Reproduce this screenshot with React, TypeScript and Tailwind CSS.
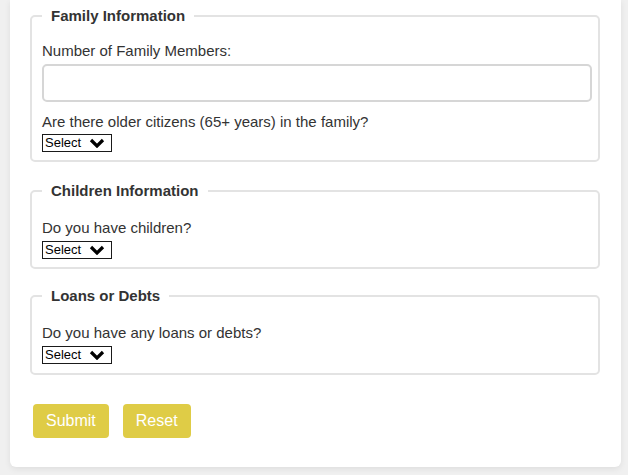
import React from 'react';

const font = { fontFamily: '"Liberation Sans", Arial, sans-serif' };

const SelectBox: React.FC = () => (
  <div className="relative w-[70px] h-[18px]">
    <select
      defaultValue=""
      className="appearance-none block w-[70px] h-[18px] border border-[#1a1a1a] bg-white pl-[2px] text-[13px] leading-[16px] text-black outline-none"
    >
      <option value="">Select</option>
      <option value="yes">Yes</option>
      <option value="no">No</option>
    </select>
    {/* chevron over the native select */}
    <svg
      className="pointer-events-none absolute right-[7px] top-[4px]"
      width="16"
      height="10"
      viewBox="0 0 16 10"
    >
      <polyline points="2,2 8,8 14,2" fill="none" stroke="#000" strokeWidth="3.2" strokeLinejoin="miter" />
    </svg>
  </div>
);

interface SectionProps {
  title: string;
  children: React.ReactNode;
  className?: string;
}

const Section: React.FC<SectionProps> = ({ title, children, className }) => (
  <fieldset className={`border-2 border-[#e3e3e3] rounded-[5px] pl-[10px] pr-[6px] ${className ?? 'pb-[8px]'}`}>
    <legend className="px-[9px] text-[15px] leading-[17px] font-bold text-[#333]">{title}</legend>
    <div className="pt-[18px]">{children}</div>
  </fieldset>
);

export default function App() {
  return (
    <div className="min-h-[475px] bg-[#f0f0f0] pl-[10px] pr-[7px]" style={font}>
      <div className="bg-white rounded-b-[6px] shadow-[0_2px_6px_rgba(0,0,0,0.08)] pt-[7px] pl-[20px] pr-[21px] pb-[29px]">
        <Section title="Family Information">
          <label className="block text-[15px] leading-[17px] text-[#333] mb-[5px]">Number of Family Members:</label>
          <input
            type="number"
            className="block w-full h-[38px] border-2 border-[#d6d6d6] rounded-[5px] outline-none px-2 text-[15px]"
          />
          <label className="block text-[15px] leading-[17px] text-[#333] mt-[11px] mb-[4px]">
            Are there older citizens (65+ years) in the family?
          </label>
          <SelectBox />
        </Section>

        <Section title="Children Information" className="mt-[20px] pb-[8px]">
          <label className="block text-[15px] leading-[17px] text-[#333] mt-[2px] mb-[5px]">Do you have children?</label>
          <SelectBox />
        </Section>

        <Section title="Loans or Debts" className="mt-[18px] pb-[9px]">
          <label className="block text-[15px] leading-[17px] text-[#333] mt-[2px] mb-[5px]">Do you have any loans or debts?</label>
          <SelectBox />
        </Section>

        <div className="flex gap-[14px] mt-[29px] pl-[3px]">
          <button className="h-[34px] px-[13px] rounded-[4px] bg-[#dfcc46] text-white text-[16px]">Submit</button>
          <button className="h-[34px] px-[13px] rounded-[4px] bg-[#dfcc46] text-white text-[16px]">Reset</button>
        </div>
      </div>
    </div>
  );
}
